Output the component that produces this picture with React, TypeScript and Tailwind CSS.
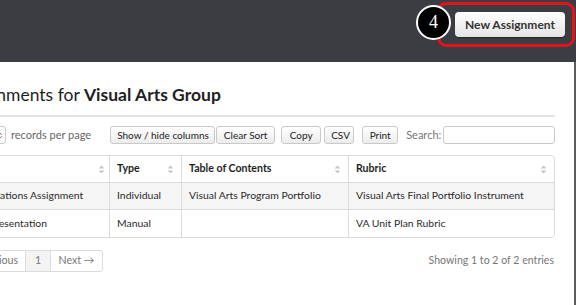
import { ChevronsUpDown } from 'lucide-react';

const font = { fontFamily: 'Lato, "Open Sans", sans-serif' };

function SortIcon() {
  return (
    <svg width="7" height="9" viewBox="0 0 7 9" className="shrink-0">
      <path d="M3.5 0.5 L6.5 3.5 H0.5 Z" fill="#c8c8c8" />
      <path d="M3.5 8.5 L6.5 5.5 H0.5 Z" fill="#c8c8c8" />
    </svg>
  );
}

function ToolButton({ label, className = '' }: { label: string; className?: string }) {
  return (
    <button
      className={`shrink-0 whitespace-nowrap h-[18px] px-[6px] rounded-[3px] border border-[#c9c9c9] bg-gradient-to-b from-white to-[#ececec] text-[10px] leading-none text-[#222] ${className}`}
    >
      {label}
    </button>
  );
}

const rows = [
  { name: 'Observations Assignment', type: 'Individual', toc: 'Visual Arts Program Portfolio', rubric: 'Visual Arts Final Portfolio Instrument' },
  { name: 'Unit Presentation', type: 'Manual', toc: '', rubric: 'VA Unit Plan Rubric' },
];

export default function App() {
  return (
    <div className="w-[576px] h-[305px] overflow-hidden bg-white relative" style={font}>
      <div className="h-[62px] bg-[#3b3d42] flex items-start justify-end">
        <div className="relative mt-[2px] mr-[1px]">
          <div className="w-[138px] h-[45px] rounded-[9px] border-[3px] border-[#e3131b] flex items-center justify-end pr-[7px]">
            <button className="w-[110px] h-[25px] rounded-[4px] bg-gradient-to-b from-white to-[#e4e4e4] text-[12px] font-bold text-[#333] shadow-[0_1px_1px_rgba(0,0,0,0.4)]">
              New Assignment
            </button>
          </div>
          <div className="absolute left-[-21px] top-[3px] w-[35px] h-[35px] rounded-full bg-black border-2 border-white flex items-center justify-center text-white text-[18px]" style={{ fontFamily: '"Liberation Serif", serif' }}>
            4
          </div>
        </div>
      </div>

      <div className="h-[243px] border-r-2 border-[#5c5c5c]">
        <h1 className="ml-[-44px] pt-[22px] text-[17.5px] leading-[22px] text-[#1e1e1e] whitespace-nowrap">
          Assignments for <span className="font-bold">Visual Arts Group</span>
        </h1>
        <div className="mt-[9px] w-[555px] h-[2px] bg-[#e4e4e4]" />

        <div className="mt-[9px] h-[18px] flex items-center w-[555px] whitespace-nowrap">
          <div className="shrink-0 ml-[-40px] w-[46px] h-[18px] rounded-[3px] border border-[#c9c9c9] bg-white flex items-center justify-end pr-[1px]">
            <ChevronsUpDown size={9} color="#444" />
          </div>
          <span className="shrink-0 ml-[5px] text-[11px] text-[#666]">records per page</span>
          <ToolButton label="Show / hide columns" className="ml-[19px] w-[105px]" />
          <ToolButton label="Clear Sort" className="ml-[1px] w-[59px]" />
          <ToolButton label="Copy" className="ml-[6px] w-[40px]" />
          <ToolButton label="CSV" className="ml-[3px] w-[30px]" />
          <ToolButton label="Print" className="ml-[8px] w-[36px]" />
          <span className="shrink-0 ml-[8px] text-[11px] text-[#777]">Search:</span>
          <input className="shrink-0 ml-auto w-[112px] h-[18px] rounded-[3px] border border-[#c9c9c9] bg-white" />
        </div>

        <div className="mt-[11px] ml-[-42px] w-[597px] rounded-[4px] border border-[#dcdcdc] overflow-hidden text-[10.4px]">
          <div className="grid grid-cols-[151px_72px_167px_1fr] h-[27px] font-bold text-[10.6px] text-[#1e1e1e] border-b border-[#dcdcdc]">
            <div className="flex items-center justify-end pr-[4px] border-r border-[#dcdcdc]">
              <SortIcon />
            </div>
            <div className="flex items-center justify-between px-[7px] border-r border-[#dcdcdc]">
              <span>Type</span>
              <SortIcon />
            </div>
            <div className="flex items-center justify-between px-[7px] border-r border-[#dcdcdc]">
              <span>Table of Contents</span>
              <SortIcon />
            </div>
            <div className="flex items-center justify-between px-[7px]">
              <span>Rubric</span>
              <SortIcon />
            </div>
          </div>
          {rows.map((r, i) => (
            <div
              key={r.name}
              className={`grid grid-cols-[151px_72px_167px_1fr] h-[27px] text-[#2a2a2a] ${i === 0 ? 'bg-[#f5f5f5] border-b border-[#dcdcdc]' : 'bg-white'}`}
            >
              <div className="flex items-center pl-[8px] border-r border-[#dcdcdc] whitespace-nowrap overflow-hidden">{r.name}</div>
              <div className="flex items-center px-[7px] border-r border-[#dcdcdc]">{r.type}</div>
              <div className="flex items-center px-[7px] border-r border-[#dcdcdc]">{r.toc}</div>
              <div className="flex items-center px-[7px]">{r.rubric}</div>
            </div>
          ))}
        </div>

        <div className="mt-[12px] flex items-center w-[555px]">
          <div className="ml-[-61px] flex h-[22px] rounded-[3px] border border-[#dcdcdc] text-[10.6px] text-[#777]">
            <div className="w-[86px] flex items-center justify-end pr-[7px] border-r border-[#dcdcdc]">← Previous</div>
            <div className="w-[25px] flex items-center justify-center bg-[#f3f3f3] border-r border-[#dcdcdc]">1</div>
            <div className="w-[51px] flex items-center justify-center">Next →</div>
          </div>
          <span className="ml-auto mr-[1px] text-[10.6px] text-[#777]">Showing 1 to 2 of 2 entries</span>
        </div>
      </div>
    </div>
  );
}
